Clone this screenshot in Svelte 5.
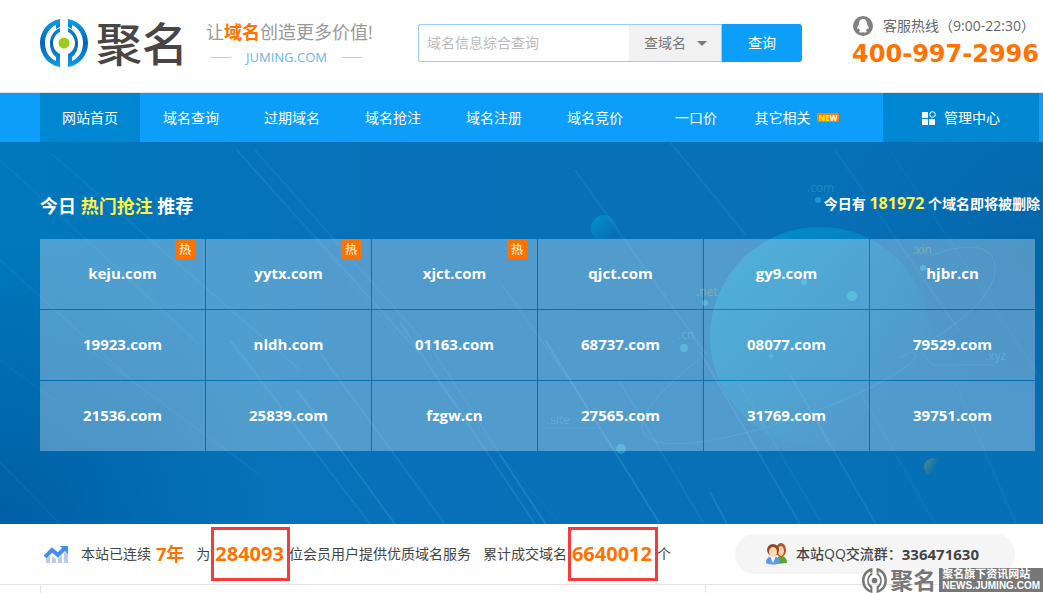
<script>
  const navItems = ['网站首页', '域名查询', '过期域名', '域名抢注', '域名注册', '域名竞价', '一口价'];

  const domains = [
    { name: 'keju.com', hot: true },
    { name: 'yytx.com', hot: true },
    { name: 'xjct.com', hot: true },
    { name: 'qjct.com' },
    { name: 'gy9.com' },
    { name: 'hjbr.cn' },
    { name: '19923.com' },
    { name: 'nldh.com' },
    { name: '01163.com' },
    { name: '68737.com' },
    { name: '08077.com' },
    { name: '79529.com' },
    { name: '21536.com' },
    { name: '25839.com' },
    { name: 'fzgw.cn' },
    { name: '27565.com' },
    { name: '31769.com' },
    { name: '39751.com' },
  ];

  // x1, y1, x2, y2, opacity
  const streaks = [
    [0, 18, 200, 203, 0.07],
    [52, 12, 300, 228, 0.08],
    [237, 8, 420, 212, 0.1],
    [230, 0, 560, 382, 0.04],
    [255, 8, 430, 206, 0.08],
    [0, 118, 130, 236, 0.07],
    [90, 208, 260, 333, 0.06],
    [0, 218, 60, 262, 0.05],
    [0, 320, 60, 382, 0.07],
    [230, 198, 370, 382, 0.12],
    [297, 248, 395, 382, 0.16],
    [320, 211, 445, 382, 0.11],
    [400, 180, 535, 382, 0.13],
    [425, 196, 545, 382, 0.08],
    [575, 28, 706, 212, 0.1],
    [670, 0, 746, 93, 0.1],
    [835, 8, 960, 190, 0.07],
    [890, 8, 1043, 240, 0.05],
    [500, 140, 560, 225, 0.08],
    [545, 198, 660, 382, 0.18],
    [500, 313, 546, 382, 0.12],
    [620, 240, 704, 382, 0.1],
    [700, 210, 800, 382, 0.13],
    [735, 235, 822, 382, 0.07],
    [790, 233, 876, 382, 0.12],
    [860, 250, 935, 382, 0.05],
    [955, 240, 1016, 382, 0.06],
    [710, 350, 727, 382, 0.16],
  ];

  const dots = [
    [818, 58, 3],
    [852, 154, 5],
    [804, 140, 3],
    [705, 161, 3],
    [684, 206, 4],
    [923, 126, 3],
    [771, 214, 2],
    [621, 307, 5],
  ];

  let keyword = $state('');
  let searchType = $state('domain');
</script>

{#snippet mark()}
  <svg class="mark" viewBox="0 0 48 48" aria-hidden="true">
    <defs>
      <linearGradient id="ring" x1="0" y1="0" x2="0" y2="1">
        <stop offset="0" stop-color="#0ba0e8" />
        <stop offset="0.5" stop-color="#0563b4" />
        <stop offset="1" stop-color="#0ba0e8" />
      </linearGradient>
    </defs>
    <g class="ring">
      <path d="M20 0C8 2 0 12 0 24s8 22 20 24V35c-4-2-7-6-7-11s3-9 7-11V9C14 11 10 17 10 24c0 6 2 11 6 14v4C9 39 5 32 5 24S9 9 16 6v4l4-2z" />
      <path d="M28 0c12 2 20 12 20 24s-8 22-20 24V35c4-2 7-6 7-11s-3-9-7-11V9c6 2 10 8 10 15 0 6-2 11-6 14v4c7-3 11-10 11-18S39 9 32 6v4l-4-2z" />
    </g>
    <circle class="core" cx="24" cy="24" r="5.5" />
  </svg>
{/snippet}

<div class="page">
  <header class="top">
    <a class="logo" href="#home">
      {@render mark()}
      <span class="wordmark">聚名</span>
    </a>
    <div class="slogan">
      <p>让<em>域名</em>创造更多价值!</p>
      <span class="site">JUMING.COM</span>
    </div>
    <form class="search" onsubmit={(e) => e.preventDefault()}>
      <input type="text" aria-label="域名" placeholder="域名信息综合查询" bind:value={keyword} />
      <div class="type">
        <select aria-label="类型" bind:value={searchType}>
          <option value="domain">查域名</option>
        </select>
      </div>
      <button type="submit">查询</button>
    </form>
    <div class="contact">
      <p>
        <svg viewBox="0 0 20 20" width="20" height="20" aria-hidden="true">
          <circle cx="10" cy="10" r="10" fill="#808080" />
          <path d="M10 3C7.500 3 6 5 6 7.500c0 .6-.2 1.200-.6 1.800C4.300 10.800 4 12.500 4.500 13c.4.2.9-.3 1.300-.8.200.9.7 1.700 1.400 2.300-1.200.4-1.300 1.600-.2 1.900 1.100.3 2.400.1 3-.5.600.6 1.900.8 3 .5 1.100-.3 1-1.500-.2-1.900.7-.6 1.200-1.400 1.400-2.300.4.5.9 1 1.300.8.5-.5.200-2.200-.9-3.700-.4-.6-.6-1.200-.6-1.800C14 5 12.500 3 10 3z" fill="#fff" />
        </svg>
        客服热线（9:00-22:30）
      </p>
      <strong>400-997-2996</strong>
    </div>
  </header>

  <nav>
    <ul>
      {#each navItems as item, i}
        <li><a href="#nav{i}" class:active={i === 0}>{item}</a></li>
      {/each}
      <li><a href="#more">其它相关<span class="new"><b>NE</b>W</span></a></li>
    </ul>
    <a class="admin" href="#admin">
      <svg viewBox="0 0 14 14" width="14" height="14" aria-hidden="true">
        <path d="M0 1h6v6H0zM0 8h6v6H0zM7 8h6v6H7z" fill="#fff" />
        <circle cx="10.500" cy="3.500" r="2.800" fill="none" stroke="#fff" />
      </svg>
      管理中心
    </a>
  </nav>

  <section class="hero">
    <svg class="backdrop" viewBox="0 0 1043 382" preserveAspectRatio="xMidYMid slice" aria-hidden="true">
      <defs>
        <linearGradient id="planet" x1="0" y1="0" x2="0.800" y2="0.800">
          <stop offset="0" stop-color="#00a8d8" stop-opacity="0.600" />
          <stop offset="0.500" stop-color="#00a8d8" stop-opacity="0.300" />
          <stop offset="1" stop-color="#00a8d8" stop-opacity="0" />
        </linearGradient>
        <linearGradient id="moon" x1="0" y1="0" x2="0.700" y2="0.400">
          <stop offset="0" stop-color="#8fa04a" stop-opacity="0.600" />
          <stop offset="1" stop-color="#8fa04a" stop-opacity="0" />
        </linearGradient>
      </defs>
      <circle cx="820" cy="195" r="110" fill="url(#planet)" />
      <circle cx="604" cy="86" r="13" fill="url(#planet)" />
      <circle cx="933" cy="325" r="9" fill="url(#moon)" />
      {#each streaks as [x1, y1, x2, y2, opacity]}
        <line {x1} {y1} {x2} {y2} stroke="#7cc8ff" stroke-width="2" stroke-opacity={opacity} />
      {/each}
      <g fill="none" stroke="#4cc4e8" stroke-opacity="0.200">
        <path d="M543 286h54M994 223h-61l-12-13" />
        <path d="M700 216c-30 25-58 50-58 70 5 30 90 12 160-12s130-60 110-64" />
        <path d="M930 114c30-12 65-15 65 12 0 30-40 60-95 90" />
      </g>
      {#each dots as [cx, cy, r]}
        <circle {cx} {cy} {r} fill="#23b4e0" fill-opacity="0.600" />
      {/each}
      <g class="tld">
        <text x="807" y="50">.com</text>
        <text x="547" y="282">.site</text>
        <text x="678" y="197">.cn</text>
        <text x="985" y="218">.xyz</text>
        <text class="gold" x="912" y="112">.xin</text>
        <text class="gold" x="696" y="154">.net</text>
      </g>
    </svg>
    <div class="content">
      <div class="heading">
        <h2>今日 <em>热门抢注</em> 推荐</h2>
        <p>今日有 <em>181972</em> 个域名即将被删除</p>
      </div>
      <div class="grid">
        {#each domains as domain}
          <a href="#{domain.name}">
            {domain.name}
            {#if domain.hot}<i>热</i>{/if}
          </a>
        {/each}
      </div>
    </div>
  </section>

  <section class="stats">
    <svg viewBox="0 0 24 18" width="24" height="18" aria-hidden="true">
      <path d="M2 14l4-3v7H2zM8 11l4 3v4H8zM14 14l4-4v8h-4zM20 8l4-2v12h-4z" fill="#b8cbe8" />
      <path d="M1 12l7-7 6 5 6-6" fill="none" stroke="#438eed" stroke-width="4" />
      <path d="M16 1h8v8z" fill="#438eed" />
    </svg>
    <p>
      <span>本站已连续</span>
      <strong class="years">7年</strong>
      <span class="gap">为</span>
      <strong class="boxed">284093</strong>
      <span>位会员用户提供优质域名服务</span>
      <span class="gap">累计成交域名</span>
      <strong class="boxed">6640012</strong>
      <span>个</span>
    </p>
    <div class="group">
      <svg viewBox="0 0 22 22" width="22" height="22" aria-hidden="true">
        <path d="M11 21c0-6 1-8 4-8 4 0 6 3 6 7z" fill="#58a832" />
        <ellipse cx="15" cy="7" rx="5" ry="7" fill="#b5532c" />
        <ellipse cx="15" cy="8" rx="3" ry="5" fill="#fad0a5" />
        <path d="M0 20c0-5 3-7 7-7s7 3 7 7c-3 2-11 2-14 0z" fill="#5d9be4" />
        <path d="M4 13l3 7 3-7z" fill="#fff" />
        <ellipse cx="7" cy="7" rx="6" ry="6" fill="#8c4a2c" />
        <ellipse cx="7" cy="9" rx="4" ry="5" fill="#fbd8b3" />
      </svg>
      本站QQ交流群：<b>336471630</b>
    </div>
  </section>

  <div class="panels">
    <div class="panel"></div>
  </div>

  <div class="watermark">
    {@render mark()}
    <span class="wordmark">聚名</span>
    <div class="tag">
      <span>聚名旗下资讯网站</span>
      <b>NEWS.JUMING.COM</b>
    </div>
  </div>
</div>

<style>
  :global(body) {
    margin: 0;
  }
  .page {
    position: relative;
    overflow: hidden;
    background: #fff;
    color: #444;
    font-family: 'Open Sans', 'Noto Sans CJK SC', sans-serif;
    font-size: 14px;
    line-height: 20px;
  }
  p,
  h2,
  ul {
    margin: 0;
    padding: 0;
  }
  a {
    color: inherit;
    text-decoration: none;
  }
  em,
  i {
    font-style: normal;
  }
  input,
  select,
  button {
    box-sizing: border-box;
    margin: 0;
    border: 0;
    font: inherit;
  }

  .top {
    display: flex;
    align-items: center;
    height: 92px;
    padding: 0 4px 0 40px;
    border-bottom: 1px solid #e4e4e4;
    white-space: nowrap;
  }
  .logo {
    display: flex;
    align-items: center;
    gap: 8px;
    width: 166px;
    height: 86px;
    align-self: flex-start;
  }
  .mark {
    width: 48px;
    height: 48px;
    flex: none;
  }
  .ring {
    fill: url(#ring);
  }
  .core {
    fill: #9ccb1c;
  }
  .logo .wordmark {
    color: #494544;
    font-size: 46px;
    font-weight: 500;
    line-height: 48px;
  }
  .slogan {
    width: 212px;
    margin-bottom: 4px;
    color: #999;
  }
  .slogan p {
    font-size: 18px;
    line-height: 26px;
  }
  .slogan em {
    color: #ff7200;
    font-weight: bold;
  }
  .site {
    display: flex;
    align-items: center;
    gap: 15px;
    padding-left: 5px;
    color: #63b8e8;
    font-size: 13px;
    line-height: 24px;
  }
  .site::before,
  .site::after {
    width: 20px;
    height: 1px;
    background: #a6d8f2;
    content: '';
  }

  .search {
    display: flex;
    flex: 0 1 384px;
    height: 38px;
    margin-bottom: 6px;
  }
  .search input {
    flex: 1;
    min-width: 0;
    padding: 0 8px;
    border: 1px solid #96cff6;
    border-right: 0;
    border-radius: 3px 0 0 3px;
    outline: 0;
  }
  .search input::placeholder {
    color: #bbb;
    opacity: 1;
  }
  .type {
    position: relative;
    width: 93px;
  }
  .type::after {
    position: absolute;
    top: 17px;
    right: 15px;
    border: 5px solid transparent;
    border-top-color: #777;
    border-bottom: 0;
    content: '';
    pointer-events: none;
  }
  .type select {
    width: 100%;
    height: 38px;
    padding: 0 15px;
    appearance: none;
    border: 1px solid #96cff6;
    border-left: 0;
    border-radius: 0;
    background: #f1f1f1;
    color: #777;
  }
  .search button {
    width: 80px;
    border-radius: 0 3px 3px 0;
    background: #0c9ef8;
    color: #fff;
  }

  .contact {
    margin-bottom: 8px;
    margin-left: auto;
  }
  .contact p {
    display: flex;
    align-items: center;
    gap: 10px;
    padding-left: 1px;
    color: #666;
    line-height: 24px;
  }
  .contact strong {
    display: block;
    color: #ff7200;
    font-family: 'DejaVu Sans', sans-serif;
    font-size: 24px;
    line-height: 32px;
  }

  nav {
    display: flex;
    justify-content: space-between;
    padding: 0 4px 0 40px;
    background: #0c9ef8;
    color: #fff;
    line-height: 49px;
    white-space: nowrap;
  }
  nav ul {
    display: flex;
    gap: 1px;
    list-style: none;
  }
  nav li a {
    display: flex;
    align-items: center;
    justify-content: center;
    min-width: 100px;
    height: 49px;
  }
  nav a.active,
  .admin {
    background: #0187d2;
  }
  .new {
    margin-left: 6px;
    padding: 0 2px;
    border-radius: 2px;
    background: #ff7d00;
    font-size: 8px;
    font-weight: bold;
    line-height: 9px;
  }
  .new b {
    color: #ffe600;
  }
  .admin {
    display: flex;
    align-items: center;
    justify-content: center;
    gap: 8px;
    width: 156px;
  }

  .hero {
    position: relative;
    background:
      radial-gradient(circle at 0 100%, rgba(0, 70, 140, 0.5), transparent 25%),
      radial-gradient(circle at 100% 30%, rgba(0, 80, 140, 0.3), transparent 20%),
      linear-gradient(90deg, #0078bc, #0870b8 40%, #0670b7);
    color: #fff;
    font-weight: bold;
  }
  .backdrop {
    position: absolute;
    inset: 0;
    width: 100%;
    height: 100%;
  }
  .tld {
    fill: #35b4d8;
    font-size: 12px;
    font-weight: normal;
    opacity: 0.4;
  }
  .tld .gold {
    fill: #b0b060;
  }
  .content {
    position: relative;
    padding: 48px 3px 73px 40px;
  }
  .heading {
    display: flex;
    justify-content: space-between;
    padding-bottom: 17px;
  }
  .heading h2 {
    font-size: 18px;
    line-height: 32px;
  }
  .heading p {
    line-height: 26px;
  }
  .heading em {
    color: #fff143;
  }
  .heading p em {
    font-size: 16px;
  }
  .grid {
    display: grid;
    grid-template-columns: repeat(6, 1fr);
    gap: 1px;
    margin-right: 5px;
  }
  .grid a {
    position: relative;
    padding-bottom: 2px;
    background: rgba(255, 255, 255, 0.3);
    font-size: 15px;
    line-height: 68px;
    text-align: center;
  }
  .grid i {
    position: absolute;
    top: 0;
    right: 10px;
    width: 20px;
    height: 20px;
    background: #ff7200;
    font-size: 12px;
    font-weight: normal;
    line-height: 22px;
  }

  .stats {
    display: flex;
    align-items: center;
    height: 60px;
    padding: 0 28px 0 44px;
    border-bottom: 1px solid #e4e4e4;
    white-space: nowrap;
  }
  .stats p {
    display: flex;
    align-items: center;
    gap: 5px;
    margin-left: 13px;
  }
  .stats strong {
    color: #ff7200;
    font-size: 20px;
  }
  .stats .years {
    font-size: 18px;
  }
  .gap {
    margin-left: 7px;
  }
  .boxed {
    position: relative;
  }
  .boxed::after {
    position: absolute;
    inset: -17px -6px -17px -4px;
    border: 3px solid #f93a3a;
    content: '';
  }
  .group {
    display: flex;
    align-items: center;
    justify-content: center;
    box-sizing: border-box;
    width: 280px;
    height: 40px;
    margin-left: auto;
    padding-right: 5px;
    border-radius: 20px;
    background: #f5f5f5;
    font-weight: 500;
  }
  .group svg {
    margin-right: 8px;
  }
  .group b {
    font-size: 15px;
  }

  .panels {
    padding-left: 40px;
  }
  .panel {
    width: 664px;
    height: 8px;
    border: solid #e4e4e4;
    border-width: 0 1px;
  }

  .watermark {
    position: absolute;
    right: 0;
    bottom: 0;
    display: flex;
    align-items: center;
    gap: 3px;
    color: #777;
    white-space: nowrap;
  }
  .watermark .mark {
    width: 25px;
    height: 25px;
  }
  .watermark .ring,
  .watermark .core {
    fill: #777;
  }
  .watermark .wordmark {
    font-size: 23px;
    font-weight: bold;
    line-height: 26px;
  }
  .tag {
    display: flex;
    flex-direction: column;
    padding: 0 3px;
    background: #777;
    color: #fff;
    font-size: 11px;
    font-weight: bold;
    line-height: 12px;
  }
  .tag b {
    font-family: 'Liberation Sans', sans-serif;
    font-size: 10px;
  }
</style>
